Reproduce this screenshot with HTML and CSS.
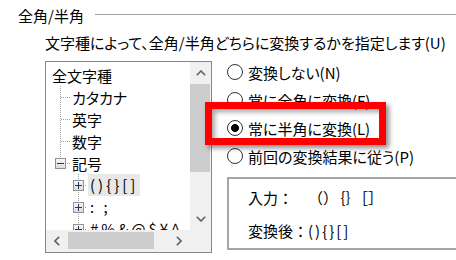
FILE: index.html
```html
<!DOCTYPE html>
<html lang="ja">
<head>
  <meta charset="UTF-8">
  <title>全角/半角</title>
  <link rel="stylesheet" href="styles.css">
</head>
<body>

  <div class="group">
    <div class="group-head">
      <span class="group-title">全角/半角</span>
      <span class="group-line"></span>
    </div>

    <p class="hint">文字種によって、全角/半角どちらに変換するかを指定します(U)</p>

    <div class="group-body">
      <div class="tree">
        <div class="nodes">
          <div class="node root">全文字種</div>
          <div class="node lvl1">カタカナ</div>
          <div class="node lvl1">英字</div>
          <div class="node lvl1">数字</div>
          <div class="node lvl1 last"><span class="sign minus"></span>記号</div>
          <div class="node lvl2"><span class="sign plus"></span><span class="label selected sym">(){}[]</span></div>
          <div class="node lvl2"><span class="sign plus"></span><span class="label sym">: ;</span></div>
          <div class="node lvl2"><span class="sign plus"></span><span class="label sym">#%&amp;@$¥^_|</span></div>
        </div>

        <div class="vbar">
          <span class="arrow">
            <svg width="10" height="6" viewBox="0 0 10 6"><polyline points="0.8,5.2 5,1 9.2,5.2" fill="none" stroke="#606060" stroke-width="1.6"/></svg>
          </span>
          <span class="vthumb"></span>
          <span class="track"></span>
          <span class="arrow">
            <svg width="10" height="6" viewBox="0 0 10 6"><polyline points="0.8,0.8 5,5 9.2,0.8" fill="none" stroke="#606060" stroke-width="1.6"/></svg>
          </span>
        </div>

        <div class="hbar">
          <span class="arrow">
            <svg width="6" height="10" viewBox="0 0 6 10"><polyline points="5.2,0.8 1,5 5.2,9.2" fill="none" stroke="#606060" stroke-width="1.6"/></svg>
          </span>
          <span class="hthumb"></span>
          <span class="track"></span>
          <span class="arrow">
            <svg width="6" height="10" viewBox="0 0 6 10"><polyline points="0.8,0.8 5,5 0.8,9.2" fill="none" stroke="#606060" stroke-width="1.6"/></svg>
          </span>
        </div>

        <div class="corner"></div>
      </div>

      <div class="options">
        <label class="option"><input type="radio" name="mode">変換しない(N)</label>
        <label class="option"><input type="radio" name="mode">常に全角に変換(F)</label>
        <label class="option"><input type="radio" name="mode" checked>常に半角に変換(L)</label>
        <label class="option"><input type="radio" name="mode">前回の変換結果に従う(P)</label>

        <div class="preview">
          <span>入力：</span><span>（）｛｝［］</span>
          <span>変換後：</span><span class="sym">(){}[]</span>
        </div>
      </div>
    </div>
  </div>

  <!-- encadré rouge de la capture -->
  <div class="callout"></div>

</body>
</html>
```

FILE: styles.css
```css
body {
  margin: 0;
  width: 456px;
  height: 260px;
  overflow: hidden;
  background: #fff;
  color: #000;
  font-family: "Noto Sans CJK JP", sans-serif;
  font-size: 15px;
  font-feature-settings: "palt";
  position: relative;
}

.group {
  padding-left: 18px;
}

.group-head {
  display: flex;
  height: 20px;
  line-height: 20px;
  margin-top: 6px;
}

.group-line {
  flex: 1;
  height: 1px;
  margin: 8px 0 0 11px;
  background: #a0a0a0;
}

.hint {
  margin: 7px 0 0 27px;
  line-height: 20px;
}

.group-body {
  display: flex;
  margin-top: 8px;
  margin-left: 27px;
}

/* Arbre */
.tree {
  flex: none;
  width: 167px;
  height: 192px;
  box-sizing: border-box;
  border: 1px solid #828790;
  display: grid;
  grid-template-columns: 1fr 21px;
  grid-template-rows: 1fr 22px;
  overflow: hidden;
}

.nodes {
  padding-top: 2px;
  overflow: hidden;
}

.node {
  height: 22px;
  display: flex;
  align-items: center;
  position: relative;
  white-space: nowrap;
}

.root {
  padding-left: 6px;
}

.lvl1 {
  padding-left: 26px;
}

.lvl2 {
  padding-left: 42px;
}

.lvl1::before, .lvl2::before {
  content: "";
  position: absolute;
  top: 0;
  width: 1px;
  height: 22px;
  background: repeating-linear-gradient(#a0a0a0 0 1px, transparent 1px 2px);
}

.lvl1::before {
  left: 14px;
}

.lvl1.last::before {
  height: 11px;
}

.lvl2::before {
  left: 32px;
}

.lvl1::after, .lvl2::after {
  content: "";
  position: absolute;
  top: 11px;
  height: 1px;
  background: repeating-linear-gradient(to right, #a0a0a0 0 1px, transparent 1px 2px);
}

.lvl1::after {
  left: 15px;
  width: 9px;
}

.lvl2::after {
  left: 33px;
  width: 8px;
}

.sign {
  position: absolute;
  top: 6px;
  width: 11px;
  height: 11px;
  box-sizing: border-box;
  border: 1px solid #919191;
  background: linear-gradient(#f7f7f7, #dcdcdc);
  z-index: 1;
}

.lvl1 .sign {
  left: 9px;
}

.lvl2 .sign {
  left: 27px;
}

.minus {
  background:
    linear-gradient(#1e395b, #1e395b) center / 7px 1px no-repeat,
    linear-gradient(#f7f7f7, #dcdcdc);
}

.plus {
  background:
    linear-gradient(#1e395b, #1e395b) center / 7px 1px no-repeat,
    linear-gradient(#1e395b, #1e395b) center / 1px 7px no-repeat,
    linear-gradient(#f7f7f7, #dcdcdc);
}

.label {
  padding: 0 2px;
  line-height: 22px;
}

.selected {
  background: #e8e8e8;
}

.sym {
  letter-spacing: 2px;
}

.label.sym {
  letter-spacing: 3px;
}

/* Barres de défilement */
.vbar, .hbar, .corner {
  background: #f0f0f0;
}

.vbar {
  display: flex;
  flex-direction: column;
}

.hbar {
  display: flex;
}

.arrow {
  flex: none;
  width: 22px;
  height: 22px;
  display: flex;
  align-items: center;
  justify-content: center;
}

.vbar .arrow {
  width: auto;
}

.hbar .arrow {
  height: auto;
}

.track {
  flex: 1;
}

.vthumb {
  height: 88px;
  margin-right: 1px;
  background: #cdcdcd;
}

.hthumb {
  width: 86px;
  margin: 2px 0 3px;
  background: #cdcdcd;
}

/* Options */
.options {
  flex: 1;
  min-width: 0;
  margin: -3px 0 0 15px;
}

.option {
  height: 28px;
  display: flex;
  align-items: center;
  white-space: nowrap;
}

.option input {
  appearance: none;
  width: 16px;
  height: 16px;
  margin: 0 5px 0 0;
  border: 1px solid #333;
  border-radius: 50%;
  background: #fff;
}

.option input:checked {
  background: radial-gradient(circle, #000 0 3.6px, #fff 4.2px);
}

.preview {
  height: 73px;
  box-sizing: border-box;
  margin: 7px -30px 0 0;
  border: 2px solid #a5a5a5;
  padding: 2px 0 0 19px;
  display: grid;
  grid-template-columns: 60px auto;
  grid-auto-rows: 33px;
  align-items: center;
  justify-content: start;
  font-feature-settings: normal;
}

.callout {
  position: absolute;
  left: 205px;
  top: 102px;
  width: 181px;
  height: 43px;
  box-sizing: border-box;
  border: 7px solid #ff0000;
  box-shadow: 3px 3px 5px rgba(0, 0, 0, 0.45), inset 4px 4px 5px -1px rgba(0, 0, 0, 0.35);
}
```
